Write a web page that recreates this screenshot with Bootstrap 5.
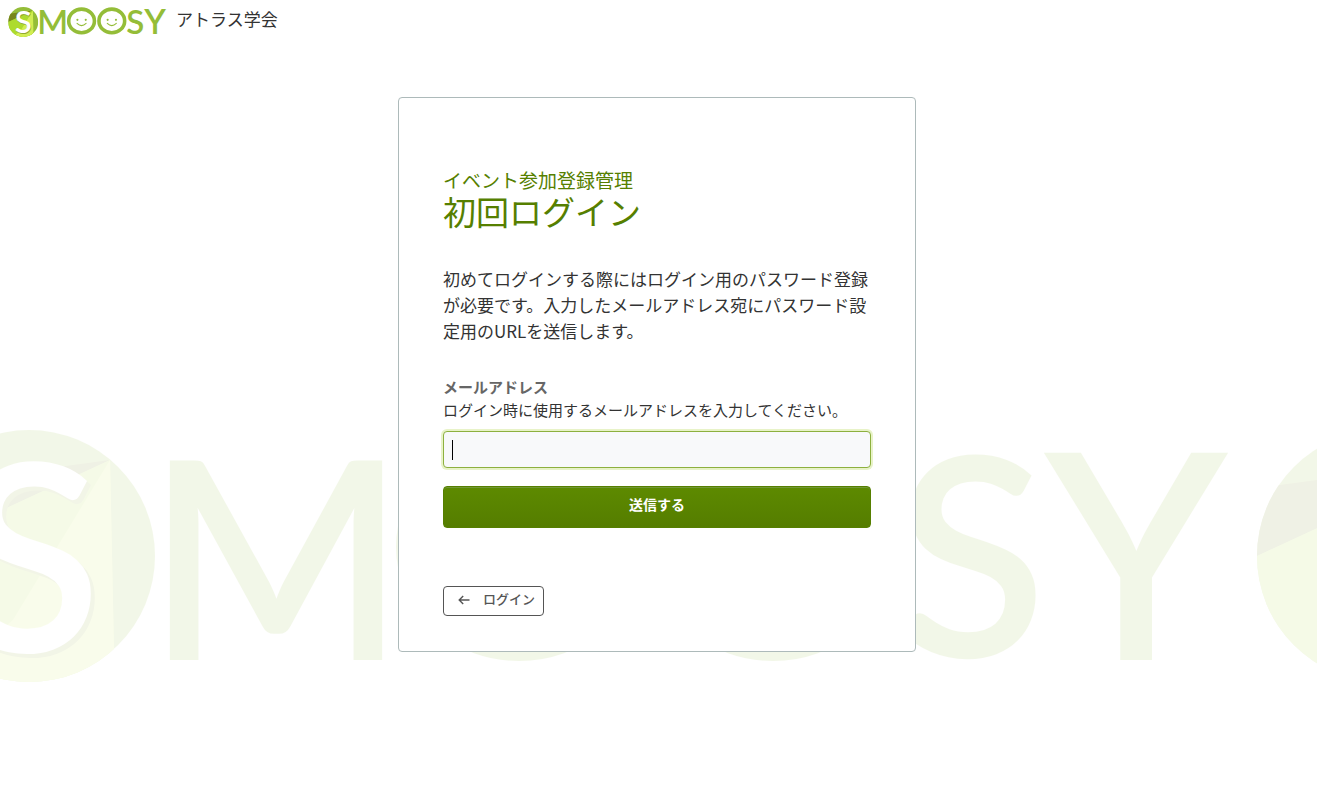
<!DOCTYPE html>
<html lang="ja">
<head>
<meta charset="utf-8">
<meta name="viewport" content="width=device-width, initial-scale=1">
<title>初回ログイン | SMOOSY</title>
<link rel="stylesheet" href="https://cdn.jsdelivr.net/npm/bootstrap@5.3.0/dist/css/bootstrap.min.css">
<style>
body { font-family: "Noto Sans CJK JP", sans-serif; font-size: 17px; color: #333; background: #fff; }
.page { overflow: hidden; }
.site-header { height: 44px; padding: 0 8px; }
.site-name { font-size: 17px; line-height: 24px; margin-top: -6px; }
.brand-logo { width: 160px; height: 30px; }
.logo-letter { font-family: Lato, sans-serif; font-weight: 600; text-anchor: middle; fill: #94bd38; }
.logo-letter-y { font-family: Inter, sans-serif; font-weight: 500; }
.logo-emblem-letter { font-family: Lato, sans-serif; font-weight: 600; text-anchor: middle; }
.watermark { top: 430px; left: 0; width: 100%; height: 252px; opacity: .11; z-index: 0; }
.login-area { z-index: 1; padding: 53px 15px 48px 12px; }
.login-card { max-width: 518px; border: 1px solid #adbaba; border-radius: 4px; }
.login-card .card-body { padding: 71px 44px 35px; }
.service-title { font-size: 19px; line-height: 22px; color: #567f00; }
.login-title { font-size: 33px; line-height: 40px; font-weight: 400; color: #567f00; margin-bottom: 35px; }
.lead-in { line-height: 26px; margin-bottom: 32px; }
.field-label { font-size: 15px; line-height: 22px; font-weight: 700; color: #666; }
.field-help { font-size: 15px; line-height: 24px; margin-bottom: 9px; color: #333; }
.mail-input, .mail-input:focus { height: 37px; padding: 0 9px; font-size: 16px; border: 1px solid #8db03e; border-radius: 4px; box-shadow: 0 0 0 2px #e8f3c8; caret-color: transparent;
  background: linear-gradient(#000, #000) 8px 8px / 1px 20px no-repeat #f8f9fa; }
.btn-send { height: 42px; margin-top: 18px; padding: 0 0 6px; font-size: 14px; font-weight: 700; line-height: 20px; color: #fff; border: 1px solid #567f00; border-radius: 4px; background: linear-gradient(#5d8a00, #557d00); box-shadow: inset 0 1px 0 #719736; }
.btn-send:hover { color: #fff; background: #4c7000; }
.btn-back { height: 30px; margin-top: 58px; padding: 0 8px 4px 14px; gap: 13px; font-size: 13px; line-height: 20px; font-weight: 500; color: #555; border: 1px solid #555; border-radius: 4px; }
.back-arrow { width: 12px; height: 10px; margin-top: 2px; }
</style>
</head>
<body>
<svg class="position-absolute" width="0" height="0" aria-hidden="true">
  <defs>
    <clipPath id="emblem-clip"><circle cx="126" cy="126" r="126"/></clipPath>
  </defs>
  <symbol id="smoosy" viewBox="0 0 1340 252">
    <g clip-path="url(#emblem-clip)">
      <rect width="252" height="252" fill="#94bd38"/>
      <path d="M0 58 23 55 207 30 0 126z" fill="#77861a"/>
      <path d="M0 126 207 30 211 220 180 252H0z" fill="#addb2e"/>
      <path d="M207 30 211 220 180 252H40L110 190z" fill="#d2ed52"/>
      <text class="logo-emblem-letter" x="131" y="226" font-size="262" fill="#92a830">S</text>
      <text class="logo-emblem-letter" x="127" y="222" font-size="262" fill="#fff">S</text>
    </g>
    <text class="logo-letter" x="373" y="230" font-size="277">M</text>
    <g fill="none" stroke="#94bd38" stroke-width="30">
      <ellipse cx="616" cy="117" rx="108" ry="99"/>
      <ellipse cx="870" cy="117" rx="108" ry="99"/>
    </g>
    <g fill="none" stroke="#94bd38" stroke-width="9" stroke-linecap="round">
      <path d="M578 138q38 38 76 0M832 138q38 38 76 0"/>
    </g>
    <g fill="#94bd38">
      <circle cx="581" cy="108" r="9"/><circle cx="651" cy="108" r="9"/>
      <circle cx="835" cy="108" r="9"/><circle cx="905" cy="108" r="9"/>
    </g>
    <text class="logo-letter" x="1068" y="227" font-size="278">S</text>
    <text class="logo-letter logo-letter-y" x="1233" y="230" font-size="285">Y</text>
  </symbol>
</svg>

<div class="page position-relative min-vh-100">
  <svg class="watermark position-absolute" viewBox="0 0 1317 252" preserveAspectRatio="xMidYMid slice" aria-hidden="true">
    <use href="#smoosy" x="-97" width="1340" height="252"/>
    <use href="#smoosy" x="1257" width="1340" height="252"/>
  </svg>

  <header class="site-header d-flex align-items-center gap-2">
    <svg class="brand-logo" role="img" aria-label="SMOOSY"><use href="#smoosy" width="160" height="30"/></svg>
    <span class="site-name">アトラス学会</span>
  </header>

  <main class="login-area position-relative d-flex justify-content-center">
    <section class="login-card card w-100">
      <div class="card-body">
        <div class="service-title">イベント参加登録管理</div>
        <h1 class="login-title">初回ログイン</h1>
        <p class="lead-in">初めてログインする際にはログイン用のパスワード登録が必要です。入力したメールアドレス宛にパスワード設定用のURLを送信します。</p>
        <form>
          <label class="field-label d-block" for="mail">メールアドレス</label>
          <div class="field-help" id="mail-help">ログイン時に使用するメールアドレスを入力してください。</div>
          <input class="form-control mail-input" type="email" id="mail" aria-describedby="mail-help" autofocus>
          <button class="btn btn-send w-100 d-block" type="submit">送信する</button>
        </form>
        <a class="btn btn-back d-inline-flex align-items-center" href="#">
          <svg class="back-arrow" viewBox="0 0 12 10" fill="none" stroke="currentColor" stroke-width="1.4" aria-hidden="true"><path d="M11.5 5H1.2M5.2 1 1.2 5l4 4"/></svg>
          ログイン
        </a>
      </div>
    </section>
  </main>
</div>
<script src="https://cdn.jsdelivr.net/npm/bootstrap@5.3.0/dist/js/bootstrap.bundle.min.js"></script>
</body>
</html>
